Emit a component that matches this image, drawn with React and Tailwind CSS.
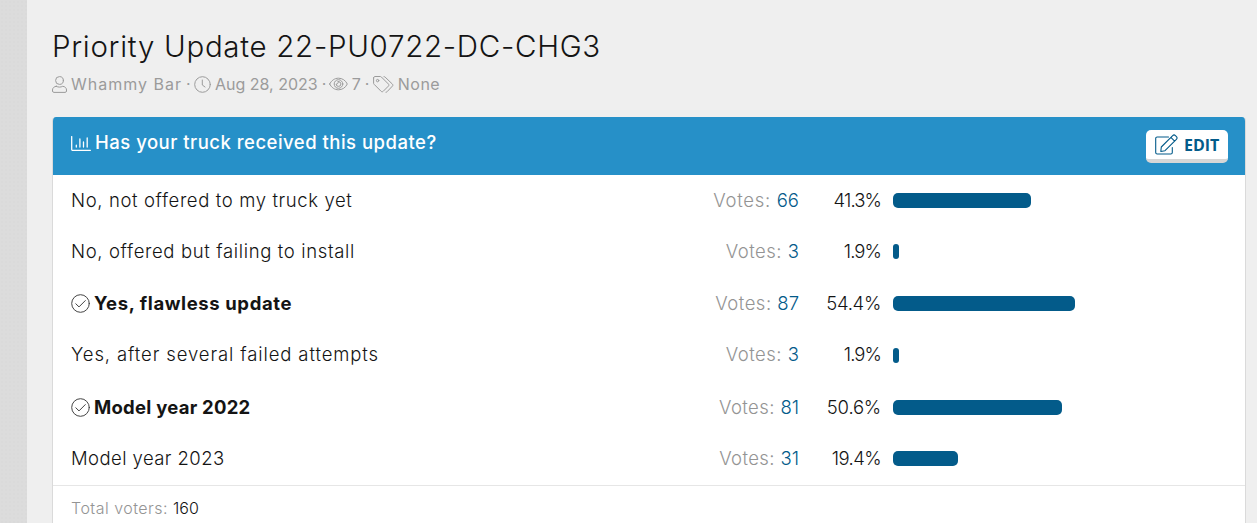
import clsx from "clsx";

const FULL_BAR = 334.6;

const responses = [
  {label: "No, not offered to my truck yet", votes: 66, percent: 41.3, height: "h-[51px]", tracking: "tracking-[0.62px]", votesTracking: "tracking-[0.7px]", percentTracking: "tracking-[-0.9px]"},
  {label: "No, offered but failing to install", votes: 3, percent: 1.9, height: "h-[51px]", tracking: "tracking-[0.64px]", votesTracking: "tracking-[0.5px]", percentTracking: "tracking-[-0.9px]"},
  {label: "Yes, flawless update", votes: 87, percent: 54.4, voted: true, height: "h-[53px]", tracking: "tracking-[0.6px]", votesTracking: "tracking-[0.5px]", percentTracking: "tracking-[-0.3px]"},
  {label: "Yes, after several failed attempts", votes: 3, percent: 1.9, height: "h-[51px]", tracking: "tracking-[0.88px]", votesTracking: "tracking-[0.5px]", percentTracking: "tracking-[-0.9px]", nudge: "pb-[2px]"},
  {label: "Model year 2022", votes: 81, percent: 50.6, voted: true, height: "h-[53px]", tracking: "tracking-[0.25px]", votesTracking: "tracking-[0.4px]", percentTracking: "tracking-[-0.2px]"},
  {label: "Model year 2023", votes: 31, percent: 19.4, height: "h-[49px]", tracking: "tracking-[0.43px]", votesTracking: "tracking-[0.4px]", percentTracking: "tracking-[-0.6px]"},
];

const Icon = ({className, viewBox, strokeWidth = 1, children}) => (
  <svg
    className={clsx("shrink-0", className)}
    viewBox={viewBox}
    fill="none"
    stroke="currentColor"
    strokeWidth={strokeWidth}
    strokeLinejoin="round"
    strokeLinecap="round"
  >
    {children}
  </svg>
);

const UserIcon = () => (
  <Icon className="w-[15px] h-[17px] mr-1" viewBox="0 0 15 17">
    <circle cx="7.5" cy="4.5" r="3.9" />
    <path d="M4.3 10.3C2 10.5.5 12 .5 14v1c0 .8.6 1.4 1.4 1.4h11.2c.8 0 1.4-.6 1.4-1.4v-1c0-2-1.5-3.5-3.8-3.7-1 .5-2 .8-3.2.8s-2.2-.3-3.2-.8z" />
  </Icon>
);

const ClockIcon = () => (
  <Icon className="w-[17px] h-[17px] mr-1" viewBox="0 0 17 17">
    <circle cx="8.5" cy="8.5" r="7.8" />
    <path d="M8.3 4v5l2.7 2" />
  </Icon>
);

const EyeIcon = () => (
  <Icon className="w-[19px] h-[14px] -ml-px mr-1" viewBox="0 0 19 14">
    <path d="M.7 7C2.4 3.4 5.7 1.2 9.5 1.2S16.6 3.4 18.3 7c-1.7 3.6-5 5.8-8.8 5.8S2.4 10.6.7 7z" />
    <circle cx="9.5" cy="7" r="4.3" />
    <path d="M9.3 4.6A2.4 2.4 0 1 1 7.1 7c.9.5 2.5-.8 2.2-2.4z" />
  </Icon>
);

const TagsIcon = () => (
  <Icon className="w-[21px] h-[17px] mr-1" viewBox="0 0 21 17">
    <path d="M.6 1.9v5.3c0 .4.2.8.5 1.1l7 7c.6.6 1.5.6 2.1 0l5.2-5.2c.6-.6.6-1.5 0-2.1l-7-7C8.1.7 7.7.5 7.3.5H2C1.2.5.6 1.1.6 1.9z" />
    <circle cx="4.6" cy="4.6" r="1.2" />
    <path d="M11 .6c.4 0 .8.2 1.1.5l7.3 7c.6.6.6 1.4 0 2l-5.3 5.6c-.4.4-.7.6-1.1.6" />
  </Icon>
);

const PollIcon = () => (
  <Icon className="w-[20px] h-[15px] mr-[4px]" viewBox="0 0 20 15" strokeWidth={1.3}>
    <path d="M.7.6v13c0 .4.3.7.7.7h18" />
    <path d="M5.3 9.2v1.8M8.9 3v8M12.5 6v5M16.2 2v9" />
  </Icon>
);

const CheckIcon = () => (
  <Icon className="w-[19px] h-[19px] mr-[4px] text-[#444]" viewBox="0 0 19 19">
    <circle cx="9.5" cy="9.5" r="8.8" />
    <path d="M4.8 9.8l3.2 3.1 6.3-6.3" />
  </Icon>
);

const EditIcon = () => (
  <Icon className="w-[23px] h-[21px]" viewBox="0 0 23 21" strokeWidth={1.1}>
    <path d="M13.5 3H2.2C1.3 3 .7 3.6.7 4.5v14c0 .9.6 1.5 1.5 1.5h13.6c.9 0 1.5-.6 1.5-1.5v-5" />
    <path d="M6.3 13L17.7 1.6c.8-.8 1.9-.8 2.7 0l1 1c.8.8.8 1.9 0 2.7L10 16.7l-4.2.8.5-4.5zM15.9 3.4l3.7 3.7" />
  </Icon>
);

const Separator = () => <span className="mx-[4px] w-[4px] text-center">·</span>;

const ThreadHeader = () => (
  <div>
    <h1 className="text-[29.5px] leading-[40px] font-light text-[#141414] tracking-[0.7px]">
      Priority Update 22-PU0722-DC-CHG3
    </h1>
    <div className="mt-[7px] flex items-center h-[22px] text-base text-[#9b9b9b]">
      <UserIcon />
      <span className="tracking-[1px]">Whammy Bar</span>
      <Separator />
      <ClockIcon />
      <span>Aug 28, 2023</span>
      <Separator />
      <EyeIcon />
      <span>7</span>
      <Separator />
      <TagsIcon />
      <span className="tracking-[0.5px]">None</span>
    </div>
  </div>
);

const PollRow = ({response}) => (
  <li className={clsx("flex items-center", response.height)}>
    <div
      className={clsx(
        "flex flex-1 items-center",
        response.tracking,
        response.nudge,
        response.voted ? "font-bold" : "font-light"
      )}
    >
      {response.voted && <CheckIcon />}
      <span>{response.label}</span>
    </div>
    <div className={clsx("w-[110px] text-right text-[#949494]", response.nudge)}>
      <span className={response.votesTracking}>Votes: </span>
      <span className="text-[#035b8a]">{response.votes}</span>
    </div>
    <div className={clsx("w-[82px] text-right", response.percentTracking, response.nudge)}>
      {response.percent}%
    </div>
    <div className="ml-[12px] w-[335px]">
      <div
        className="h-[15px] rounded-[5px] bg-[#035b8a]"
        style={{width: Math.round((response.percent / 100) * FULL_BAR)}}
      />
    </div>
  </li>
);

const Poll = () => (
  <section className="mt-[22px] w-[1194px] h-[420px] rounded-t-[4px] border border-t-0 border-[#dadada] bg-white overflow-hidden">
    <header className="flex justify-between h-[58px] bg-[#2690c8] pl-[18px] pr-[17px] pt-[13px] text-white">
      <h2 className="flex items-center h-[26px] text-[18.5px] font-medium tracking-[0.49px]">
        <PollIcon />
        <span>Has your truck received this update?</span>
      </h2>
      <button className="flex items-center w-[82px] h-[33px] rounded-[5px] border-b-[4px] border-[#d6d6d6] bg-white pl-[9px] text-[#035b8a]">
        <EditIcon />
        <span className="ml-[6px] font-['Open_Sans',sans-serif] text-[16px] font-bold">EDIT</span>
      </button>
    </header>
    <ul className="pb-[2px] pl-[18px] pr-[17px] text-[18.5px] font-light text-[#141414]">
      {responses.map((response) => (
        <PollRow key={response.label} response={response} />
      ))}
    </ul>
    <footer className="border-t border-[#e6e6e6] pl-[18px] pt-[10px] text-base leading-[25px] font-light">
      <span className="text-[#949494] tracking-[0.48px]">Total voters: </span>
      <span className="text-[#141414]">160</span>
    </footer>
  </section>
);

const App = () => (
  <div className="flex h-[523px] w-[1257px] overflow-hidden bg-[#efefef] font-['Inter',sans-serif] whitespace-nowrap">
    <aside className="w-[27px] shrink-0 bg-[#dcdcdc] bg-[radial-gradient(#dadada_1px,transparent_1px)] bg-[length:4px_4px]" />
    <main className="pl-[25px] pt-[26px]">
      <ThreadHeader />
      <Poll />
    </main>
  </div>
);

export default App;
